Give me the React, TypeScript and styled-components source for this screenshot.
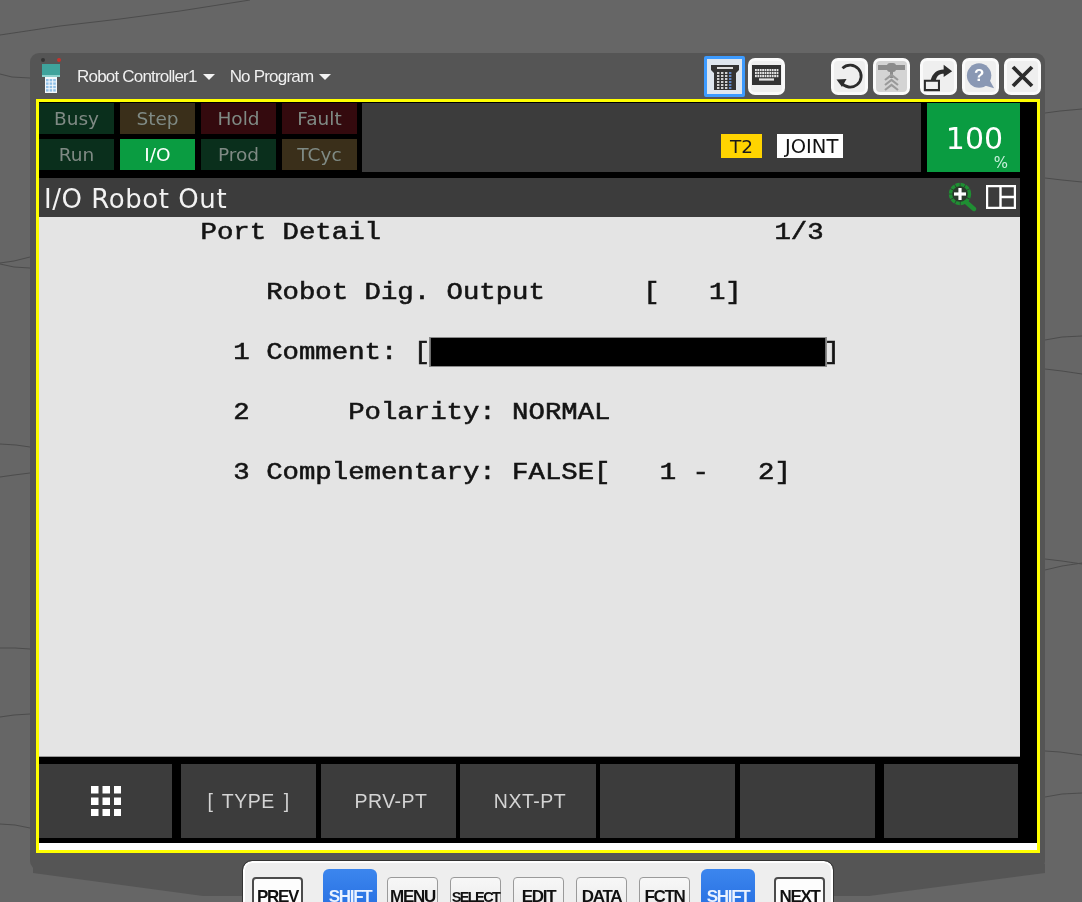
import React from "react";
import styled, { createGlobalStyle } from "styled-components";

const Global = createGlobalStyle`
  html, body { margin: 0; padding: 0; height: 902px; overflow: hidden; background: #666; }
  #root { height: 902px; }
  * { box-sizing: border-box; }
`;

const Page = styled.div`
  position: relative;
  width: 1082px;
  height: 902px;
  overflow: hidden;
  background: #666666;
  padding: 53px 0 0 30px;
  font-family: "DejaVu Sans", sans-serif;
  filter: blur(0.35px);
`;

const Cracks = styled.svg`
  position: absolute;
  inset: 0;
  width: 1082px;
  height: 902px;
`;

const Panel = styled.div`
  position: relative;
  width: 1015px;
  height: 817px;
  background: #555555;
  border-radius: 9px;
  padding: 0 0 0 6px;
  &::after {
    content: "";
    position: absolute;
    left: 3px;
    right: 0;
    top: calc(100% - 6px);
    height: 32px;
    background: #555555;
    clip-path: polygon(0 0, 100% 0, 100% 9px, 836px 32px, 170px 32px, 0 9px);
  }
`;

const TitleStrip = styled.div`
  height: 46px;
  display: flex;
  align-items: center;
  padding: 0 4px 0 3px;
`;

const Pendant = styled.svg`
  width: 24px;
  height: 38px;
  margin: -2px 14px 0 0;
  flex: none;
`;

const Crumb = styled.span`
  font-family: "Liberation Sans", sans-serif;
  font-size: 17px;
  letter-spacing: -0.8px;
  color: #f0f0f0;
  margin: 2px 15px 0 0;
  display: inline-flex;
  align-items: center;
  gap: 6px;
  &::after {
    content: "";
    border-left: 6px solid transparent;
    border-right: 6px solid transparent;
    border-top: 6px solid #f4f4f4;
  }
`;

const ToolSpacer = styled.div`
  flex: 1;
`;

const ToolGroup = styled.div<{ $gap: number; $left: number }>`
  display: flex;
  align-items: center;
  gap: ${(p) => p.$gap}px;
  margin-left: ${(p) => p.$left}px;
`;

const ToolButton = styled.div<{ $selected?: boolean; $muted?: boolean }>`
  width: ${(p) => (p.$selected ? 41 : 37)}px;
  height: ${(p) => (p.$selected ? 41 : 37)}px;
  border-radius: ${(p) => (p.$selected ? 2 : 7)}px;
  border: 3px solid ${(p) => (p.$selected ? "#3d9bff" : "#fafafa")};
  background: ${(p) => (p.$muted ? "#d4d4d4" : p.$selected ? "#dfe6ee" : "#efefef")};
  display: flex;
  align-items: center;
  justify-content: center;
  svg { display: block; }
`;

const Frame = styled.div`
  width: 1004px;
  height: 754px;
  border: 3px solid #ffff00;
  background: #000;
  display: flex;
  flex-direction: column;
`;

const StatusRow = styled.div`
  width: 981px;
  height: 69px;
  margin-top: 1px;
  display: flex;
`;

const Lamps = styled.div`
  display: grid;
  grid-template-columns: repeat(4, 75px);
  grid-template-rows: 31px 31px;
  column-gap: 6px;
  row-gap: 5px;
  flex: none;
`;

const lampColor: Record<string, string> = {
  green: "#0a2f1c",
  brown: "#3a2f1a",
  red: "#340a0e",
  on: "#0a9c41",
};

const Lamp = styled.div<{ $tone: string }>`
  background: ${(p) => lampColor[p.$tone]};
  color: ${(p) => (p.$tone === "on" ? "#ffffff" : "#7f8a84")};
  font-size: 18.5px;
  display: flex;
  align-items: center;
  justify-content: center;
`;

const Indicators = styled.div`
  flex: 1;
  margin-left: 5px;
  background: #3c3c3c;
  display: flex;
  justify-content: flex-end;
  align-items: flex-start;
  gap: 15px;
  padding: 31px 78px 0 0;
`;

const ModeTag = styled.div`
  width: 41px;
  height: 24px;
  background: #ffd400;
  color: #1a1a1a;
  font-size: 18.5px;
  display: flex;
  align-items: center;
  justify-content: center;
`;

const CoordTag = styled.div`
  width: 66px;
  height: 24px;
  background: #fff;
  color: #111;
  font-size: 19.5px;
  padding-left: 8px;
  line-height: 25px;
  overflow: hidden;
  white-space: nowrap;
`;

const Override = styled.div`
  position: relative;
  width: 93px;
  margin-left: 6px;
  background: #0a9c41;
  color: #fff;
  font-size: 30px;
  display: flex;
  justify-content: center;
  padding: 17px 0 0 2px;
  line-height: 38px;
`;

const Percent = styled.span`
  position: absolute;
  right: 12px;
  bottom: 0;
  font-size: 15px;
  line-height: 17px;
  color: #c8f0dc;
`;

const HeaderBar = styled.div`
  width: 981px;
  height: 39px;
  margin-top: 6px;
  background: #3c3c3c;
  color: #f2f2f2;
  display: flex;
  align-items: center;
  justify-content: space-between;
  padding: 0 4px 0 5px;
`;

const HeaderTitle = styled.div`
  font-size: 26px;
  letter-spacing: 0.55px;
  line-height: 39px;
  margin-top: 3px;
`;

const HeaderIcons = styled.div`
  display: flex;
  align-items: center;
  gap: 8px;
  margin-top: -2px;
`;

const Screen = styled.div`
  width: 981px;
  height: 540px;
  background: #e4e4e4;
  border-bottom: 1px solid #9a9a9a;
  padding-left: 14px;
  overflow: hidden;
`;

const Terminal = styled.div`
  width: 820px;
  transform: scaleX(1.188);
  transform-origin: left top;
  font-family: "Liberation Mono", monospace;
  font-size: 23px;
  color: #141414;
  -webkit-text-stroke: 0.55px #141414;
`;

const Line = styled.div`
  height: 30px;
  line-height: 32px;
  white-space: pre;
`;

const Redacted = styled.span`
  display: inline-block;
  width: 24.2ch;
  height: 30px;
  vertical-align: top;
  background: #000;
  border: 1px solid #8a8a8a;
  margin-right: -0.2ch;
`;

const SoftRow = styled.div`
  width: 979px;
  height: 74px;
  margin-top: 7px;
  display: flex;
`;

const SoftKey = styled.div<{ $w: number; $gap: number; $nudge: number }>`
  width: ${(p) => p.$w}px;
  margin-left: ${(p) => p.$gap}px;
  padding-left: ${(p) => p.$nudge}px;
  background: #3c3c3c;
  color: #d4d4d4;
  font-family: "Liberation Sans", sans-serif;
  font-size: 19.5px;
  letter-spacing: 0.5px;
  word-spacing: 3px;
  display: flex;
  align-items: center;
  justify-content: center;
  white-space: pre;
`;

const WhiteStrip = styled.div`
  margin-top: auto;
  height: 7px;
  background: #fff;
`;

const Keypad = styled.div`
  position: relative;
  z-index: 1;
  width: 590px;
  height: 60px;
  margin: 8px 0 0 207px;
  background: #eeeeee;
  border: 2px solid #fff;
  border-radius: 9px 9px 0 0;
  outline: 1px solid #333;
  padding: 14px 0 0 7px;
  display: flex;
  align-items: flex-start;
`;

const NavKey = styled.div<{ $gap: number }>`
  width: 51px;
  height: 50px;
  margin-left: ${(p) => p.$gap}px;
  background: #fdfdfd;
  border: 2.5px solid #4c4c4c;
  border-radius: 4px;
`;

const MenuKey = styled.div<{ $gap: number }>`
  width: 51px;
  height: 50px;
  margin-left: ${(p) => p.$gap}px;
  background: linear-gradient(#f7f7f7, #e6e6e6);
  border: 1.5px solid #9a9a9a;
  border-radius: 4px;
`;

const ShiftKey = styled.div<{ $gap: number }>`
  width: 54px;
  height: 58px;
  margin: -8px 0 0 ${(p) => p.$gap}px;
  background: linear-gradient(#3c86ee, #1e66dc);
  border-radius: 6px;
`;

const KeyLabel = styled.div<{ $light?: boolean; $tight?: boolean; $top: number }>`
  font-family: "Liberation Sans", sans-serif;
  font-weight: 700;
  font-size: ${(p) => (p.$tight ? 14.5 : 17)}px;
  letter-spacing: ${(p) => (p.$tight ? -1.6 : -1.3)}px;
  line-height: 20px;
  text-align: center;
  padding-top: ${(p) => p.$top}px;
  color: ${(p) => (p.$light ? "#eaf2ff" : "#111")};
  white-space: nowrap;
`;

const Squares = styled.svg`
  width: 30px;
  height: 30px;
`;

const crackLines = [
  "M0 35L60 26L120 19L180 11L250 0",
  "M0 74L12 77L30 78",
  "M0 263L14 261L30 257",
  "M0 264L14 267L30 268",
  "M0 444L16 445L30 447",
  "M0 477L14 475L30 473",
  "M0 648L15 648L30 649",
  "M0 717L14 715L30 714",
  "M0 824L15 825L30 828",
  "M1045 113L1060 111L1082 109",
  "M1045 178L1062 180L1082 182",
  "M1045 340L1062 337L1082 336",
  "M1045 369L1062 371L1082 374",
  "M1045 559L1062 561L1082 564",
  "M1045 570L1062 566L1082 563",
  "M1045 751L1060 752L1082 755",
  "M1045 797L1062 794L1082 793",
];

const PendantIcon = () => (
  <Pendant viewBox="0 0 24 38">
    <circle cx="4" cy="4" r="2" fill="#333" />
    <circle cx="20" cy="4" r="2" fill="#c8322c" />
    <rect x="3" y="8" width="18" height="13" fill="#3fa39c" />
    <rect x="3" y="19" width="18" height="2" fill="#8cd0cc" />
    <rect x="6" y="21" width="12" height="16" fill="#f4f8fc" />
    {[0, 1, 2, 3].map((r) =>
      [0, 1, 2].map((c) => (
        <rect key={`${r}-${c}`} x={7 + c * 3.6} y={23 + r * 3.4} width="2.6" height="2.4" fill="#8fc0e8" />
      ))
    )}
  </Pendant>
);

const TeachIcon = () => (
  <svg width="30" height="30" viewBox="0 0 30 30">
    <path d="M1 4H29V9L26 12V29H4V12L1 9Z" fill="#333" />
    <rect x="7" y="6" width="16" height="2" fill="#ddd" />
    {[0, 1, 2, 3, 4, 5].map((r) =>
      [0, 1, 2, 3].map((c) => (
        <rect
          key={`${r}-${c}`}
          x={7 + c * 4}
          y={11 + r * 3}
          width="2.4"
          height="2"
          fill={c === 3 ? "#5f86c4" : "#d0d0d0"}
        />
      ))
    )}
  </svg>
);

const KeyboardIcon = () => (
  <svg width="29" height="22" viewBox="0 0 29 22">
    <rect x="0" y="0" width="29" height="20" fill="#333" />
    {[0, 1, 2].map((r) =>
      Array.from({ length: 10 }).map((_, c) => (
        <rect key={`${r}-${c}`} x={3 + c * 2.4} y={4 + r * 3} width="1.8" height="2.2" fill="#e4e4e4" />
      ))
    )}
    <rect x="7" y="13.4" width="15" height="2.2" fill="#e4e4e4" />
  </svg>
);

const ReloadIcon = () => (
  <svg width="31" height="31" viewBox="0 0 31 31">
    <path d="M8.5 7.2A11 11 0 1 1 7.2 21.5" fill="none" stroke="#2c2c2c" strokeWidth="2.8" />
    <path d="M2.5 18.5L12.5 18L8 26Z" fill="#2c2c2c" />
  </svg>
);

const JogIcon = () => (
  <svg width="31" height="31" viewBox="0 0 31 31">
    <rect x="2" y="4" width="27" height="5" fill="#8c8c8c" />
    <rect x="11" y="2" width="9" height="9" rx="3" fill="#8c8c8c" />
    <rect x="14" y="10" width="3" height="7" fill="#8c8c8c" />
    <path d="M9 19L15.5 14L22 19M9 24L15.5 19L22 24M9 29L15.5 24L22 29" fill="none" stroke="#9a9a9a" strokeWidth="2.2" />
  </svg>
);

const ShareIcon = () => (
  <svg width="33" height="31" viewBox="0 0 33 31">
    <path d="M2 20H17V30H2Z" fill="none" stroke="#2c2c2c" strokeWidth="2.2" />
    <path d="M8 20C10 12 15 8 22 8V3L31 10L22 16V12.5C17 12.5 14.5 15 13.5 20Z" fill="#2c2c2c" />
  </svg>
);

const HelpIcon = () => (
  <svg width="33" height="31" viewBox="0 0 33 31">
    <circle cx="15" cy="14.5" r="13" fill="#8a98b4" />
    <path d="M21 25L31 28L26 19Z" fill="#8a98b4" />
    <text x="15" y="20.5" textAnchor="middle" fontFamily="Liberation Sans" fontWeight="700" fontSize="18" fill="#fff">
      ?
    </text>
  </svg>
);

const CloseIcon = () => (
  <svg width="31" height="31" viewBox="0 0 31 31">
    <path d="M6 6L25 25M25 6L6 25" stroke="#2c2c2c" strokeWidth="3.8" />
  </svg>
);

const ZoomIcon = () => (
  <svg width="32" height="30" viewBox="0 0 32 30">
    <circle cx="14" cy="12" r="9.5" fill="#2a3a2c" stroke="#1f8f33" strokeWidth="3.4" strokeDasharray="4.2 0.8" />
    <rect x="8" y="10.4" width="12" height="3.2" fill="#fff" />
    <rect x="12.4" y="6" width="3.2" height="12" fill="#fff" />
    <path d="M20 20L28 27" stroke="#1f8f33" strokeWidth="4.4" strokeLinecap="round" />
  </svg>
);

const SplitIcon = () => (
  <svg width="30" height="24" viewBox="0 0 30 24">
    <path d="M1 1H29V23H1ZM14.5 1V23M14.5 12H29" fill="none" stroke="#fff" strokeWidth="2.4" />
  </svg>
);

const keys = [0, 1, 2].flatMap((r) => [0, 1, 2].map((c) => ({ x: c * 11.5, y: r * 11.5 })));

const softKeys = [
  { w: 133, gap: 0, nudge: 0, label: "" },
  { w: 135, gap: 9, nudge: 0, label: "[ TYPE ]" },
  { w: 135, gap: 5, nudge: 5, label: "PRV-PT" },
  { w: 136, gap: 4, nudge: 4, label: "NXT-PT" },
  { w: 135, gap: 4, nudge: 0, label: "" },
  { w: 135, gap: 5, nudge: 0, label: "" },
  { w: 134, gap: 9, nudge: 0, label: "" },
];

export default function App() {
  return (
    <Page>
      <Global />
      <Cracks viewBox="0 0 1082 902">
        {crackLines.map((d) => (
          <path key={d} d={d} fill="none" stroke="#4c4c4c" strokeWidth="1" />
        ))}
      </Cracks>
      <Panel>
        <TitleStrip>
          <PendantIcon />
          <Crumb>Robot Controller1</Crumb>
          <Crumb>No Program</Crumb>
          <ToolSpacer />
          <ToolGroup $gap={3} $left={0}>
            <ToolButton $selected>
              <TeachIcon />
            </ToolButton>
            <ToolButton>
              <KeyboardIcon />
            </ToolButton>
          </ToolGroup>
          <ToolGroup $gap={5} $left={46}>
            <ToolButton>
              <ReloadIcon />
            </ToolButton>
            <ToolButton $muted>
              <JogIcon />
            </ToolButton>
          </ToolGroup>
          <ToolGroup $gap={5} $left={10}>
            <ToolButton>
              <ShareIcon />
            </ToolButton>
            <ToolButton>
              <HelpIcon />
            </ToolButton>
            <ToolButton>
              <CloseIcon />
            </ToolButton>
          </ToolGroup>
        </TitleStrip>
        <Frame>
          <StatusRow>
            <Lamps>
              <Lamp $tone="green">Busy</Lamp>
              <Lamp $tone="brown">Step</Lamp>
              <Lamp $tone="red">Hold</Lamp>
              <Lamp $tone="red">Fault</Lamp>
              <Lamp $tone="green">Run</Lamp>
              <Lamp $tone="on">I/O</Lamp>
              <Lamp $tone="green">Prod</Lamp>
              <Lamp $tone="brown">TCyc</Lamp>
            </Lamps>
            <Indicators>
              <ModeTag>T2</ModeTag>
              <CoordTag>JOINT</CoordTag>
            </Indicators>
            <Override>
              100
              <Percent>%</Percent>
            </Override>
          </StatusRow>
          <HeaderBar>
            <HeaderTitle>I/O Robot Out</HeaderTitle>
            <HeaderIcons>
              <ZoomIcon />
              <SplitIcon />
            </HeaderIcons>
          </HeaderBar>
          <Screen>
            <Terminal>
              <Line>{"         Port Detail                        1/3"}</Line>
              <Line />
              <Line>{"             Robot Dig. Output      [   1]"}</Line>
              <Line />
              <Line>
                {"           1 Comment: ["}
                <Redacted />
                {"]"}
              </Line>
              <Line />
              <Line>{"           2      Polarity: NORMAL"}</Line>
              <Line />
              <Line>{"           3 Complementary: FALSE[   1 -   2]"}</Line>
            </Terminal>
          </Screen>
          <SoftRow>
            {softKeys.map((k, i) => (
              <SoftKey key={i} $w={k.w} $gap={k.gap} $nudge={k.nudge}>
                {i === 0 ? (
                  <Squares viewBox="0 0 30 30">
                    {keys.map((s) => (
                      <rect key={`${s.x}-${s.y}`} x={s.x} y={s.y} width="7.5" height="7.5" fill="#fff" />
                    ))}
                  </Squares>
                ) : (
                  k.label
                )}
              </SoftKey>
            ))}
          </SoftRow>
          <WhiteStrip />
        </Frame>
        <Keypad>
          <NavKey $gap={0}>
            <KeyLabel $top={8}>PREV</KeyLabel>
          </NavKey>
          <ShiftKey $gap={20}>
            <KeyLabel $light $top={18}>SHIFT</KeyLabel>
          </ShiftKey>
          <MenuKey $gap={10}>
            <KeyLabel $top={9}>MENU</KeyLabel>
          </MenuKey>
          <MenuKey $gap={12}>
            <KeyLabel $tight $top={9}>SELECT</KeyLabel>
          </MenuKey>
          <MenuKey $gap={12}>
            <KeyLabel $top={9}>EDIT</KeyLabel>
          </MenuKey>
          <MenuKey $gap={12}>
            <KeyLabel $top={9}>DATA</KeyLabel>
          </MenuKey>
          <MenuKey $gap={12}>
            <KeyLabel $top={9}>FCTN</KeyLabel>
          </MenuKey>
          <ShiftKey $gap={11}>
            <KeyLabel $light $top={18}>SHIFT</KeyLabel>
          </ShiftKey>
          <NavKey $gap={19}>
            <KeyLabel $top={8}>NEXT</KeyLabel>
          </NavKey>
        </Keypad>
      </Panel>
    </Page>
  );
}
